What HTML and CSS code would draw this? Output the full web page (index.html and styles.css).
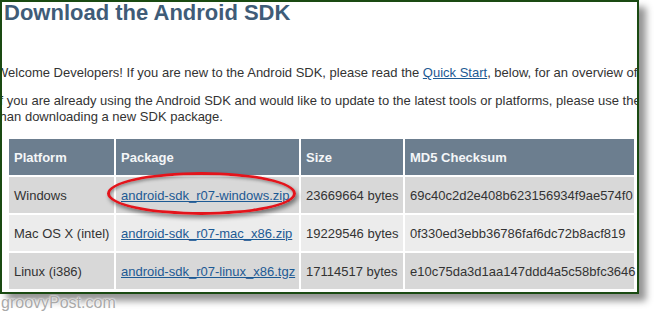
FILE: index.html
```html
<!DOCTYPE html>
<html lang="en">
<head>
  <meta charset="UTF-8">
  <title>Download the Android SDK</title>
  <link rel="stylesheet" href="styles.css">
</head>
<body>
  <div class="frame">
    <h1>Download the Android SDK</h1>

    <p class="intro">Welcome Developers! If you are new to the Android SDK, please read the <a href="#">Quick Start</a>, below, for an overview of how to install and set up the SDK.</p>

    <p class="intro">If you are already using the Android SDK and would like to update to the latest tools or platforms, please use the Android SDK and AVD Manager to get the components, rather<br>than downloading a new SDK package.</p>

    <!-- Downloads -->
    <table class="downloads">
      <colgroup>
        <col class="c-platform"><col class="c-package"><col class="c-size"><col class="c-md5">
      </colgroup>
      <tr>
        <th>Platform</th><th>Package</th><th>Size</th><th>MD5 Checksum</th>
      </tr>
      <tr class="odd">
        <td>Windows</td><td><a href="#">android-sdk_r07-windows.zip</a></td><td>23669664 bytes</td><td>69c40c2d2e408b623156934f9ae574f0</td>
      </tr>
      <tr class="even">
        <td>Mac OS X (intel)</td><td><a href="#">android-sdk_r07-mac_x86.zip</a></td><td>19229546 bytes</td><td>0f330ed3ebb36786faf6dc72b8acf819</td>
      </tr>
      <tr class="odd">
        <td>Linux (i386)</td><td><a href="#">android-sdk_r07-linux_x86.tgz</a></td><td>17114517 bytes</td><td>e10c75da3d1aa147ddd4a5c58bfc3646</td>
      </tr>
    </table>

    <!-- hand-drawn highlight round the windows package -->
    <div class="highlight"></div>
  </div>

  <div class="watermark">groovyPost.com</div>
</body>
</html>
```

FILE: styles.css
```css
/* ====== Page ====== */
body{margin:0;background:#fff;font-family:'Liberation Sans',Arial,sans-serif;font-size:13px;color:#333;overflow:hidden}

/* ====== Screenshot frame ====== */
.frame{position:relative;width:635px;height:290px;border:2px solid #1a4a12;overflow:hidden;background:#fff;box-shadow:7px 7px 7px rgba(0,0,0,.42)}

h1{margin:-3px 0 0 2px;font-size:22px;line-height:28px;font-weight:bold;color:#3f5c78;white-space:nowrap}

.intro{margin:12px 0 0 -6px;line-height:16px;white-space:nowrap}
h1 + .intro{margin-top:38px}
.intro a{color:#1d5a94}

/* ====== Downloads table ====== */
.downloads{margin:12px 0 0 5px;border-collapse:separate;border-spacing:2px;table-layout:fixed;width:629px}
.c-platform{width:105px}
.c-package{width:183px}
.c-size{width:102px}
.c-md5{width:229px}
.downloads th,.downloads td{height:36px;padding:0 5px;text-align:left;white-space:nowrap;box-sizing:border-box}
.downloads th{background:#6c7e8f;color:#f4f6f8;font-weight:bold}
.downloads .odd td{background:#d8d8d8}
.downloads .even td{background:#ececec}
.downloads a{color:#1d5a94}

/* ====== Red marker ellipse ====== */
.highlight{position:absolute;left:105px;top:170px;width:189px;height:43px;box-sizing:border-box;border:3px solid #e3141b;border-radius:50%;box-shadow:2px 3px 4px rgba(0,0,0,.45),inset 1px 2px 3px rgba(0,0,0,.3)}

/* ====== Watermark ====== */
.watermark{margin:0 0 0 1px;font-size:16px;line-height:18px;color:#a9a9a9;text-shadow:0 0 2px #fff,0 0 2px #fff;position:relative}
```
